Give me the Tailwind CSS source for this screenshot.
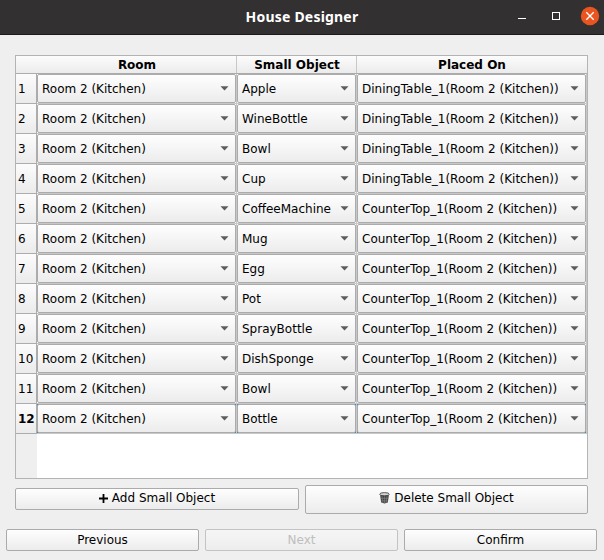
<!DOCTYPE html>
<html lang="en">
<head>
<meta charset="utf-8">
<title>House Designer</title>
<script src="https://cdn.jsdelivr.net/npm/@tailwindcss/browser@4"></script>
</head>
<body class="w-[604px] h-[560px] overflow-hidden bg-[#efefef] flex flex-col text-black text-[12px] leading-[14px] font-['DejaVu_Sans',sans-serif]">
<header class="relative h-[35px] shrink-0 bg-[#333031] border-b border-[#1c1a1b] flex items-center justify-end text-white">
  <h1 class="absolute inset-x-0 top-[9px] text-center text-[14px] leading-[16px] tracking-[0.2px] font-bold font-['Noto_Sans',sans-serif]">House Designer</h1>
  <svg class="w-[92px] h-[34px] shrink-0" viewBox="0 0 92 34" fill="none">
    <path d="M6 18.5h8" stroke="#fff"/>
    <rect x="40.5" y="12.5" width="7" height="7" stroke="#fff"/>
    <circle cx="78" cy="16" r="9.2" fill="#e95420"/>
    <path d="M74.3 12.3l7.4 7.4M81.7 12.3l-7.4 7.4" stroke="#fff" stroke-width="1.3"/>
  </svg>
</header>
<main class="flex flex-col pt-[20px]">
  <section class="ml-[15px] w-[573px] h-[424px] border border-[#b4b4b4] bg-white flex flex-col">
    <div class="flex h-[18px] shrink-0 bg-linear-to-b from-[#fcfcfc] to-[#ebebeb] border-b border-[#acacac] font-bold text-center leading-[18px]">
      <div class="w-[221px] pl-[22px] border-r border-[#c8c8c8]">Room</div>
      <div class="w-[120px] pl-[1px] border-r border-[#c8c8c8]">Small Object</div>
      <div class="w-[230px]">Placed On</div>
    </div>
    <div id="rows" class="flex flex-col"></div>
    <div class="grow w-[21px] bg-[#efefef]"></div>
  </section>
  <div class="flex items-start gap-[6px] pl-[15px] mt-[6px]">
    <button class="mt-[3px] w-[284px] h-[22px] rounded-[2px] border border-[#ababab] bg-linear-to-b from-[#fefefe] to-[#ececec] flex items-center justify-center gap-[4px] pb-[2px]">
      <svg class="w-[9px] h-[9px]" viewBox="0 0 9 9"><path d="M4.5 0v9M0 4.5h9" stroke="#000" stroke-width="1.8"/></svg>
      <span>Add Small Object</span>
    </button>
    <button class="w-[283px] h-[29px] rounded-[2px] border border-[#ababab] bg-linear-to-b from-[#fefefe] to-[#ececec] flex items-center justify-center gap-[4px] pb-[3px]">
      <svg class="w-[11px] h-[12px]" viewBox="0 0 11 12" fill="none">
        <path d="M1 2.5L2.2 10.6Q5.5 12.2 8.8 10.6L10 2.5Z" fill="#444"/>
        <path d="M3 4l1 7M5.5 4v7.3M8 4l-1 7M2 6.3h7M2.3 8.8h6.4" stroke="#929292" stroke-width=".5"/>
        <ellipse cx="5.5" cy="2.2" rx="4.8" ry="1.6" fill="#d5d5d5" stroke="#333" stroke-width=".8"/>
      </svg>
      <span>Delete Small Object</span>
    </button>
  </div>
  <nav class="flex gap-[6px] pl-[6px] mt-[15px]">
    <button class="w-[193px] h-[22px] rounded-[2px] border border-[#ababab] bg-linear-to-b from-[#fefefe] to-[#ececec] leading-[20px]">Previous</button>
    <button disabled class="w-[193px] h-[22px] rounded-[2px] border border-[#c3c3c3] bg-linear-to-b from-[#f6f6f6] to-[#ededed] text-[#bebebe] leading-[20px]">Next</button>
    <button class="w-[193px] h-[22px] rounded-[2px] border border-[#ababab] bg-linear-to-b from-[#fefefe] to-[#ececec] leading-[20px]">Confirm</button>
  </nav>
</main>
<script>
const dining = 'DiningTable_1(Room 2 (Kitchen))', counter = 'CounterTop_1(Room 2 (Kitchen))';
const objects = ['Apple','WineBottle','Bowl','Cup','CoffeeMachine','Mug','Egg','Pot','SprayBottle','DishSponge','Bowl','Bottle'];
const combo = (text, width, current) => `
  <div class="${width} h-[30px] border-r border-b border-[#c8c8c8] ${current ? 'bg-[#308cc6]' : 'bg-white'}">
    <div class="h-[29px] rounded-[2px] border border-[#ababab] bg-linear-to-b from-[#fefefe] to-[#ececec] flex items-center justify-between pl-[4px] pr-[6px] whitespace-nowrap">
      <span>${text}</span>
      <svg class="w-[9px] h-[5px] shrink-0" viewBox="0 0 9 5"><path d="M.5 .3h8L4.5 4.6z" fill="#5c5c5c"/></svg>
    </div>
  </div>`;
document.getElementById('rows').innerHTML = objects.map((name, i) => `
  <div class="flex h-[30px]">
    <div class="w-[21px] border-r border-b border-[#acacac] bg-linear-to-b from-[#fcfcfc] to-[#ebebeb] pl-[2px] leading-[30px] ${i === 11 ? 'font-bold' : ''}">${i + 1}</div>
    ${combo('Room 2 (Kitchen)', 'w-[200px]', i === 11)}
    ${combo(name, 'w-[120px]', i === 11)}
    ${combo(i < 4 ? dining : counter, 'w-[230px]', i === 11)}
  </div>`).join('');
</script>
</body>
</html>
